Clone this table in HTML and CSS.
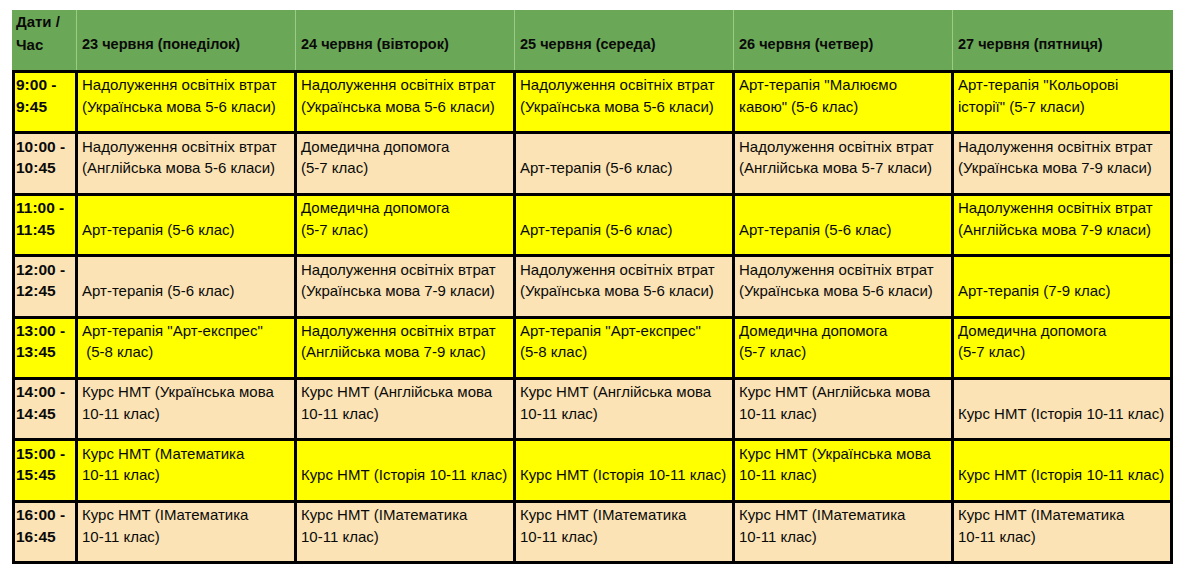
FILE: index.html
```html
<!DOCTYPE html>
<html lang="uk">
<head>
<meta charset="utf-8">
<title>Розклад</title>
<link rel="stylesheet" href="styles.css">
</head>
<body>
<div class="sheet">
  <div class="head">
    <div class="hc first">Дати /<br>Час</div>
    <div class="hc">23 червня (понеділок)</div>
    <div class="hc">24 червня (вівторок)</div>
    <div class="hc">25 червня (середа)</div>
    <div class="hc">26 червня (четвер)</div>
    <div class="hc">27 червня (пятниця)</div>
  </div>
  <div class="body">
    <div class="c t y">9:00 -<br>9:45</div>
    <div class="c y">Надолуження освітніх втрат<br>(Українська мова 5-6 класи)</div>
    <div class="c y">Надолуження освітніх втрат<br>(Українська мова 5-6 класи)</div>
    <div class="c y">Надолуження освітніх втрат<br>(Українська мова 5-6 класи)</div>
    <div class="c y">Арт-терапія "Малюємо<br>кавою" (5-6 клас)</div>
    <div class="c y">Арт-терапія "Кольорові<br>історії" (5-7 класи)</div>

    <div class="c t b">10:00 -<br>10:45</div>
    <div class="c b">Надолуження освітніх втрат<br>(Англійська мова 5-6 класи)</div>
    <div class="c b">Домедична допомога<br>(5-7 клас)</div>
    <div class="c b">Арт-терапія (5-6 клас)</div>
    <div class="c b">Надолуження освітніх втрат<br>(Англійська мова 5-7 класи)</div>
    <div class="c b">Надолуження освітніх втрат<br>(Українська мова 7-9 класи)</div>

    <div class="c t y">11:00 -<br>11:45</div>
    <div class="c y">Арт-терапія (5-6 клас)</div>
    <div class="c y">Домедична допомога<br>(5-7 клас)</div>
    <div class="c y">Арт-терапія (5-6 клас)</div>
    <div class="c y">Арт-терапія (5-6 клас)</div>
    <div class="c y">Надолуження освітніх втрат<br>(Англійська мова 7-9 класи)</div>

    <div class="c t b">12:00 -<br>12:45</div>
    <div class="c b">Арт-терапія (5-6 клас)</div>
    <div class="c b">Надолуження освітніх втрат<br>(Українська мова 7-9 класи)</div>
    <div class="c b">Надолуження освітніх втрат<br>(Українська мова 5-6 класи)</div>
    <div class="c b">Надолуження освітніх втрат<br>(Українська мова 5-6 класи)</div>
    <div class="c y">Арт-терапія (7-9 клас)</div>

    <div class="c t y">13:00 -<br>13:45</div>
    <div class="c y">Арт-терапія "Арт-експрес"<br>&nbsp;(5-8 клас)</div>
    <div class="c y">Надолуження освітніх втрат<br>(Англійська мова 7-9 клас)</div>
    <div class="c y">Арт-терапія "Арт-експрес"<br>(5-8 клас)</div>
    <div class="c y">Домедична допомога<br>(5-7 клас)</div>
    <div class="c y">Домедична допомога<br>(5-7 клас)</div>

    <div class="c t b">14:00 -<br>14:45</div>
    <div class="c b">Курс НМТ (Українська мова<br>10-11 клас)</div>
    <div class="c b">Курс НМТ (Англійська мова<br>10-11 клас)</div>
    <div class="c b">Курс НМТ (Англійська мова<br>10-11 клас)</div>
    <div class="c b">Курс НМТ (Англійська мова<br>10-11 клас)</div>
    <div class="c b">Курс НМТ (Історія 10-11 клас)</div>

    <div class="c t y">15:00 -<br>15:45</div>
    <div class="c y">Курс НМТ (Математика<br>10-11 клас)</div>
    <div class="c y">Курс НМТ (Історія 10-11 клас)</div>
    <div class="c y">Курс НМТ (Історія 10-11 клас)</div>
    <div class="c y">Курс НМТ (Українська мова<br>10-11 клас)</div>
    <div class="c y">Курс НМТ (Історія 10-11 клас)</div>

    <div class="c t b">16:00 -<br>16:45</div>
    <div class="c b">Курс НМТ (IМатематика<br>10-11 клас)</div>
    <div class="c b">Курс НМТ (IМатематика<br>10-11 клас)</div>
    <div class="c b">Курс НМТ (IМатематика<br>10-11 клас)</div>
    <div class="c b">Курс НМТ (IМатематика<br>10-11 клас)</div>
    <div class="c b">Курс НМТ (IМатематика<br>10-11 клас)</div>
  </div>
</div>
</body>
</html>
```
FILE: styles.css
```css
html, body {
  margin: 0;
  padding: 0;
  background: #ffffff;
}
body {
  font-family: "Liberation Sans", Arial, sans-serif;
  color: #0a0a0a;
}
.sheet {
  padding: 10px 0 0 12px;
  width: 1161px;
}
.head {
  display: grid;
  grid-template-columns: 64px 219px 219px 219px 219px 221px;
  height: 60px;
  background: #6aa756;
}
.hc {
  display: flex;
  flex-direction: column;
  justify-content: flex-end;
  padding: 0 0 14px 5px;
  border-left: 1px solid #9ccb86;
  font-weight: bold;
  font-size: 14.5px;
  line-height: 23px;
  white-space: nowrap;
}
.hc.first {
  border-left: none;
  padding-left: 4px;
  font-size: 15px;
}
.body {
  display: grid;
  grid-template-columns: 60px repeat(5, 216px);
  grid-template-rows: repeat(8, 58.4px);
  gap: 3px;
  padding: 3px;
  background: #000000;
}
.c {
  display: flex;
  flex-direction: column;
  justify-content: flex-end;
  padding: 0 0 14px 4px;
  font-size: 15px;
  line-height: 21.5px;
  white-space: nowrap;
  overflow: hidden;
}
.c.t {
  font-weight: bold;
  font-size: 15.5px;
  padding-left: 1px;
}
.y { background: #ffff00; }
.b { background: #fbe3b5; }
```
